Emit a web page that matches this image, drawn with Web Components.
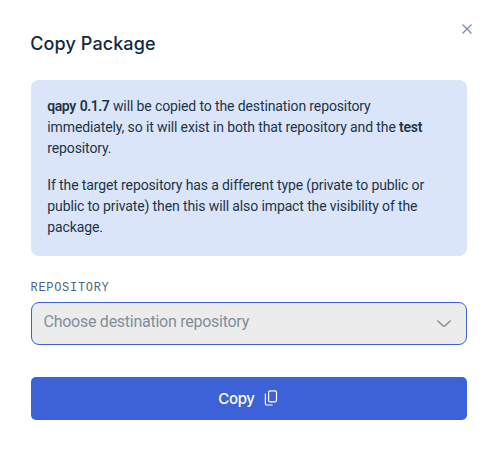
<!DOCTYPE html>
<html lang="en"><head><meta charset="utf-8"><title>Copy Package</title>
<style>
html,body{margin:0;height:100%;background:#fff}
body{overflow:hidden;font-family:Roboto,"Liberation Sans",sans-serif;color:#1d3448}
b{font-weight:600;letter-spacing:-.45px;word-spacing:1px;margin-right:.2px}
b.t{letter-spacing:-.25px}
</style></head><body>
<copy-dialog heading="Copy Package">
  <info-note>
    <note-text><div><b>qapy 0.1.7</b> will be copied to the destination repository</div><div>immediately, so it will exist in both that repository and the <b class="t">test</b></div><div>repository.</div></note-text>
    <note-text><div>If the target repository has a different type (private to public or</div><div>public to private) then this will also impact the visibility of the</div><div>package.</div></note-text>
  </info-note>
  <select-field label="REPOSITORY">Choose destination repository</select-field>
  <primary-button>Copy</primary-button>
</copy-dialog>
<script>
const define = (name, render) => customElements.define(name, class extends HTMLElement {
  connectedCallback() {
    if (!this.shadowRoot) this.attachShadow({mode: 'open'}).innerHTML = render(this);
  }
});
define('close-icon', () => `
<style>:host{display:block;width:10px;height:10px}svg{display:block}</style>
<svg width="10" height="10" viewBox="0 0 10 10" fill="none" stroke="#7b8b99" stroke-width="1.15"><path d="M.5 .5l9 9M9.5 .5l-9 9"/></svg>`);
define('copy-dialog', el => `
<style>
:host{display:block;box-sizing:border-box;height:450px;padding:24px 30px 30px 31px;background:#fff}
header{display:flex;justify-content:space-between;align-items:flex-start;height:56px}
h1{margin:7px 0 0 -.7px;font:450 18px/26px Inter,sans-serif;letter-spacing:.1px;color:#14293d}
close-icon{margin:.4px -5px 0 0}
</style>
<header><h1>${el.getAttribute('heading')}</h1><close-icon></close-icon></header>
<slot></slot>`);
define('info-note', () => `
<style>:host{display:flex;flex-direction:column;gap:16px;box-sizing:border-box;height:176px;padding:16px;border-radius:8px;background:#dae5f9}</style>
<slot></slot>`);
define('note-text', () => `
<style>
:host{display:block;font-size:14px;line-height:21px;letter-spacing:-.12px;white-space:nowrap}
::slotted(div){padding-left:.3px}
</style>
<slot></slot>`);
define('select-field', el => `
<style>
:host{display:block;margin-top:24px}
label{display:block;height:16px;margin-left:-.5px;font:12px/16px "Liberation Mono",monospace;letter-spacing:.7px;color:#50657a}
.box{display:flex;align-items:center;justify-content:space-between;box-sizing:border-box;height:43px;margin-top:6px;padding:0 14px 0 11.5px;border:1px solid #3d61d9;border-radius:8px;background:#ececec;color:#7f8e9b;font-size:16px;letter-spacing:-.26px}
span{margin-top:-5px}
svg{display:block}
</style>
<label>${el.getAttribute('label')}</label>
<div class="box"><span><slot></slot></span>
<svg width="16" height="10" viewBox="0 0 16 10" fill="none" stroke="#7b8b99" stroke-width="1.4" stroke-linecap="round" stroke-linejoin="round"><path d="M1.8 2L7 6.8Q8 7.6 9 6.8L14.2 2"/></svg></div>`);
define('primary-button', () => `
<style>
:host{display:block;margin-top:32px}
button{display:flex;align-items:center;justify-content:center;gap:9.5px;box-sizing:border-box;width:100%;height:42.6px;margin:0;padding:0 1.5px 0 0;border:0;border-radius:5px;background:#3d61d6;color:#fff;font:500 15px/20px Inter,sans-serif;letter-spacing:-.35px}
span{padding-top:2px}
svg{display:block}
</style>
<button><span><slot></slot></span>
<svg width="14" height="16" viewBox="0 0 14 16" fill="none" stroke="#fff" stroke-width="1.2" stroke-linecap="round" stroke-linejoin="round"><rect x="4.6" y=".8" width="7.9" height="11" rx="1.6"/><path d="M1.4 4.2v9.2q0 1.6 1.6 1.6h5"/></svg></button>`);
</script>
</body></html>
